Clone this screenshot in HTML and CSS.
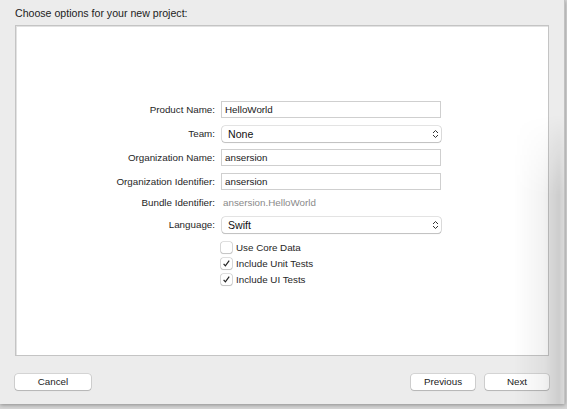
FILE: index.html
```html
<!DOCTYPE html>
<html>
<head>
<meta charset="utf-8">
<link rel="stylesheet" href="styles.css">
</head>
<body>
<div class="window">
  <div class="title">Choose options for your new project:</div>
  <div class="panel">
    <div class="form">
      <div class="row r1"><div class="label">Product Name:</div><div class="field">HelloWorld</div></div>
      <div class="row r2"><div class="label">Team:</div><div class="popup"><span>None</span><svg class="step" width="7" height="10" viewBox="0 0 7 10"><path d="M1 4 L3.5 1.5 L6 4 M1 6 L3.5 8.5 L6 6" fill="none" stroke="#333" stroke-width="1"/></svg></div></div>
      <div class="row r3"><div class="label">Organization Name:</div><div class="field">ansersion</div></div>
      <div class="row r4"><div class="label">Organization Identifier:</div><div class="field">ansersion</div></div>
      <div class="row r5"><div class="label">Bundle Identifier:</div><div class="static">ansersion.HelloWorld</div></div>
      <div class="row r6"><div class="label">Language:</div><div class="popup"><span>Swift</span><svg class="step" width="7" height="10" viewBox="0 0 7 10"><path d="M1 4 L3.5 1.5 L6 4 M1 6 L3.5 8.5 L6 6" fill="none" stroke="#333" stroke-width="1"/></svg></div></div>
      <div class="row check c1"><div class="label"></div><div class="cb"></div><span class="cbl">Use Core Data</span></div>
      <div class="row check c2"><div class="label"></div><div class="cb"><svg width="11" height="11" viewBox="0 0 11 11"><path d="M2.6 5.8 L4.4 7.8 L8.2 2.6" fill="none" stroke="#222" stroke-width="1.2"/></svg></div><span class="cbl">Include Unit Tests</span></div>
      <div class="row check c3"><div class="label"></div><div class="cb"><svg width="11" height="11" viewBox="0 0 11 11"><path d="M2.6 5.8 L4.4 7.8 L8.2 2.6" fill="none" stroke="#222" stroke-width="1.2"/></svg></div><span class="cbl">Include UI Tests</span></div>
    </div>
  </div>
  <div class="buttons">
    <div class="btn cancel">Cancel</div>
    <div class="spacer"></div>
    <div class="btn prev">Previous</div>
    <div class="btn next">Next</div>
  </div>
  <div class="shade"></div>
</div>
</body>
</html>
```
FILE: styles.css
```css
html, body {
  margin: 0;
  padding: 0;
}
body {
  width: 567px;
  height: 409px;
  background: #d6d6d6;
  font-family: "Liberation Sans", Arial, sans-serif;
  color: #222;
  overflow: hidden;
}
.window {
  position: relative;
  width: 565px;
  height: 404px;
  background: #ececec;
  border-right: 1px solid #c2c2c2;
  box-shadow: 0 1px 4px rgba(0,0,0,0.35);
  padding: 0 15px;
  box-sizing: border-box;
  display: flex;
  flex-direction: column;
}
.title {
  height: 25px;
  box-sizing: border-box;
  padding-top: 6px;
  font-size: 10.6px;
  line-height: 15px;
  color: #222;
}
.panel {
  width: 534px;
  height: 331px;
  box-sizing: border-box;
  background: #fff;
  border: 1px solid #c4c4c4;
  box-shadow: inset 1px 1px 0 #e2e2e2;
}
.form {
  padding-top: 75px;
  display: flex;
  flex-direction: column;
}
.row {
  display: flex;
  align-items: center;
  height: 17px;
  font-size: 9.8px;
}
.label {
  width: 199px;
  flex: none;
  text-align: right;
  margin-right: 6px;
  color: #262626;
}
.field {
  width: 220px;
  height: 17px;
  box-sizing: border-box;
  border: 1px solid #cfcfcf;
  padding-left: 3px;
  line-height: 15px;
  color: #1a1a1a;
}
.popup {
  width: 219px;
  height: 16px;
  margin-left: 1px;
  box-sizing: border-box;
  border-radius: 3px;
  background: #fff;
  box-shadow: 0 0 0 0.6px rgba(0,0,0,0.22), 0 1px 1px rgba(0,0,0,0.16);
  padding-left: 6px;
  padding-right: 2px;
  display: flex;
  align-items: center;
  justify-content: space-between;
  font-size: 10.6px;
  color: #111;
}
.step {
  display: block;
}
.static {
  color: #8a8a8a;
  padding-left: 2px;
}
.r1 { margin-top: 0; }
.r2 { margin-top: 7px; }
.r3 { margin-top: 7px; }
.r4 { margin-top: 7px; }
.r5 { margin-top: 5px; height: 15px; }
.r6 { margin-top: 6px; }
.check { height: 15px; }
.c1 { margin-top: 7px; }
.c2 { margin-top: 1px; }
.c3 { margin-top: 0.5px; }
.cb {
  width: 11px;
  height: 11px;
  box-sizing: border-box;
  border-radius: 2px;
  background: #fff;
  box-shadow: 0 0 0 0.6px rgba(0,0,0,0.25), 0 1px 1px rgba(0,0,0,0.12);
  margin-left: 0;
  margin-right: 4px;
  flex: none;
}
.cb svg { display: block; }
.cbl {
  color: #262626;
  font-size: 9.8px;
}
.buttons {
  display: flex;
  padding-top: 18px;
}
.spacer { flex: 1; }
.btn {
  height: 16px;
  box-sizing: border-box;
  background: #fff;
  border-radius: 3px;
  box-shadow: 0 0 0 0.6px rgba(0,0,0,0.2), 0 1px 1px rgba(0,0,0,0.15);
  font-size: 9.8px;
  line-height: 16px;
  text-align: center;
  color: #222;
}
.cancel { width: 76px; }
.prev { width: 64px; margin-right: 10px; }
.next { width: 64px; }
.shade {
  position: absolute;
  right: 0;
  top: 115px;
  bottom: 0;
  width: 50px;
  background: linear-gradient(to right, rgba(0,0,0,0) 0%, rgba(0,0,0,0.05) 60%, rgba(0,0,0,0.13) 90%, rgba(0,0,0,0.08) 100%);
  -webkit-mask-image: linear-gradient(to bottom, transparent 0, #000 80px);
  mask-image: linear-gradient(to bottom, transparent 0, #000 80px);
  pointer-events: none;
}
```
